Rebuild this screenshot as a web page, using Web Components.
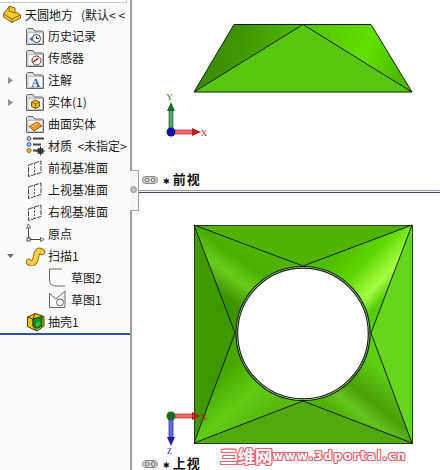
<!DOCTYPE html>
<html lang="zh">
<head>
<meta charset="utf-8">
<title>天圆地方</title>
<style>
  html, body { margin: 0; padding: 0; background: #fff; }
</style>
</head>
<body>
<cad-app>
  <feature-tree slot="tree">
    <tree-row label="天圆地方&nbsp;&nbsp;&nbsp;(默认&lt;&nbsp;&lt;" text-x="25" icon-x="3" class="title"><part-icon slot="icon" kind="part"></part-icon></tree-row>
    <tree-row label="历史记录"><folder-icon slot="icon" kind="history"></folder-icon></tree-row>
    <tree-row label="传感器"><folder-icon slot="icon" kind="sensor"></folder-icon></tree-row>
    <tree-row label="注解" arrow="right"><folder-icon slot="icon" kind="note"></folder-icon></tree-row>
    <tree-row label="实体(1)" arrow="right"><folder-icon slot="icon" kind="solid"></folder-icon></tree-row>
    <tree-row label="曲面实体"><folder-icon slot="icon" kind="surface"></folder-icon></tree-row>
    <tree-row label="材质&nbsp;&nbsp;&lt;未指定&gt;"><part-icon slot="icon" kind="material"></part-icon></tree-row>
    <tree-row label="前视基准面"><part-icon slot="icon" kind="plane"></part-icon></tree-row>
    <tree-row label="上视基准面"><part-icon slot="icon" kind="plane"></part-icon></tree-row>
    <tree-row label="右视基准面"><part-icon slot="icon" kind="plane"></part-icon></tree-row>
    <tree-row label="原点"><part-icon slot="icon" kind="origin"></part-icon></tree-row>
    <tree-row label="扫描1" arrow="down"><part-icon slot="icon" kind="sweep"></part-icon></tree-row>
    <tree-row label="草图2" text-x="71" icon-x="48"><part-icon slot="icon" kind="sketch2"></part-icon></tree-row>
    <tree-row label="草图1" text-x="71" icon-x="48"><part-icon slot="icon" kind="sketch1"></part-icon></tree-row>
    <tree-row label="抽壳1"><part-icon slot="icon" kind="shell"></part-icon></tree-row>
  </feature-tree>

  <view-pane slot="top" label="前视" style="height:190px; --label-bottom:1px">
    <svg width="309" height="190" viewBox="131 0 309 190">
      <defs>
        <linearGradient id="ta" gradientUnits="userSpaceOnUse" x1="205" y1="40" x2="300" y2="60">
          <stop offset="0" stop-color="#3b8c02"/>
          <stop offset=".35" stop-color="#3f9500"/>
          <stop offset="1" stop-color="#55bd00"/>
        </linearGradient>
        <linearGradient id="tb" gradientUnits="userSpaceOnUse" x1="310" y1="30" x2="400" y2="75">
          <stop offset="0" stop-color="#56c400"/>
          <stop offset=".6" stop-color="#62e000"/>
          <stop offset="1" stop-color="#4fb800"/>
        </linearGradient>
      </defs>
      <polygon points="234,24.5 303,24.5 194,92" fill="url(#ta)"/>
      <polygon points="303,24.5 371,24.5 412,92" fill="url(#tb)"/>
      <polygon points="303,24.5 194,92 412,92" fill="#58c50e"/>
      <g fill="none" stroke="#10200a" stroke-width="1">
        <polygon points="234,24.5 371,24.5 412,92 194,92"/>
        <path d="M194 92 303 24.5 412 92"/>
      </g>
      <g>
        <rect x="169" y="108" width="4" height="24" fill="#5f9f6f" stroke="#1d6a2a" stroke-width=".7"/>
        <path d="M171 102 175 111H167Z" fill="#1d6a2a"/>
        <rect x="171" y="130" width="22" height="4" fill="#ee6a6a" stroke="#b02020" stroke-width=".7"/>
        <path d="M201 132 192 128V136Z" fill="#b52020"/>
        <circle cx="171" cy="132" r="4.500" fill="#12129a"/>
        <text x="169.500" y="100" font-size="9" font-family="Liberation Serif, serif" fill="#1d7a2a" text-anchor="middle">Y</text>
        <text x="204" y="136" font-size="9" font-family="Liberation Serif, serif" fill="#c02020" text-anchor="middle">X</text>
      </g>
    </svg>
  </view-pane>

  <view-divider slot="divider"></view-divider>

  <view-pane slot="bottom" label="上视" style="height:277px; --label-bottom:-3px">
    <svg width="309" height="277" viewBox="131 193 309 277">
      <defs>
        <linearGradient id="tl" gradientUnits="userSpaceOnUse" x1="250" y1="240" x2="215" y2="290">
          <stop offset="0" stop-color="#4fb400"/>
          <stop offset=".35" stop-color="#4aae00"/>
          <stop offset=".65" stop-color="#68cc1c"/>
          <stop offset="1" stop-color="#3d9200"/>
        </linearGradient>
        <linearGradient id="tr" gradientUnits="userSpaceOnUse" x1="345" y1="245" x2="392" y2="290">
          <stop offset="0" stop-color="#4dbb00"/>
          <stop offset=".4" stop-color="#5fd800"/>
          <stop offset=".78" stop-color="#a6ff44"/>
          <stop offset="1" stop-color="#58cc06"/>
        </linearGradient>
        <linearGradient id="br" gradientUnits="userSpaceOnUse" x1="390" y1="375" x2="350" y2="425">
          <stop offset="0" stop-color="#5ccf10"/>
          <stop offset=".5" stop-color="#4b9f08"/>
          <stop offset=".75" stop-color="#63c41e"/>
          <stop offset="1" stop-color="#4fb000"/>
        </linearGradient>
        <linearGradient id="bl" gradientUnits="userSpaceOnUse" x1="215" y1="380" x2="255" y2="425">
          <stop offset="0" stop-color="#47a800"/>
          <stop offset=".55" stop-color="#60cc12"/>
          <stop offset="1" stop-color="#58b80e"/>
        </linearGradient>
      </defs>
      <rect x="194" y="225" width="218" height="218" fill="#4fb300"/>
      <polygon points="194,225 194,443 235,333" fill="#3e9800"/>
      <polygon points="412,225 412,443 371,333" fill="#65d61c"/>
      <polygon points="194,443 412,443 303,401" fill="#52a90e"/>
      <path d="M194 225 303 266A67 67 0 0 0 235 333Z" fill="url(#tl)"/>
      <path d="M412 225 371 333A68 68 0 0 0 303 266Z" fill="url(#tr)"/>
      <path d="M412 443 303 401A68 68 0 0 0 371 333Z" fill="url(#br)"/>
      <path d="M194 443 235 333A68 68 0 0 0 303 401Z" fill="url(#bl)"/>
      <circle cx="303" cy="333.500" r="67" fill="#cfe6b8" stroke="#10200a" stroke-width="1.200"/>
      <circle cx="303" cy="333.500" r="65.300" fill="#fff" stroke="#142a0a" stroke-width="1.200"/>
      <g fill="none" stroke="#10200a" stroke-width="1">
        <rect x="194.500" y="225.500" width="218" height="218" stroke="#24401a"/>
        <path d="M194 225 303 266 412 225 371 333 412 443 303 401 194 443 235 333Z"/>
      </g>
      <g>
        <rect x="171" y="414" width="22" height="4" fill="#ee6a6a" stroke="#b02020" stroke-width=".7"/>
        <path d="M201 416 192 412V420Z" fill="#b52020"/>
        <rect x="169" y="416" width="4" height="22" fill="#6a6ae0" stroke="#20209a" stroke-width=".7"/>
        <path d="M171 446 167 437H175Z" fill="#20209a"/>
        <circle cx="171" cy="416" r="4.500" fill="#1c6a24"/>
        <text x="204" y="420" font-size="9" font-family="Liberation Serif, serif" fill="#c02020" text-anchor="middle">X</text>
        <text x="169.500" y="454" font-size="8" font-family="Liberation Serif, serif" fill="#20209a" text-anchor="middle">Z</text>
      </g>
    </svg>
    <water-mark>
      <span class="cn">三维网</span><span>www.3dportal.cn</span>
    </water-mark>
  </view-pane>
</cad-app>

<script>
const CJK = '"Noto Sans CJK SC", "Liberation Sans", sans-serif';

class CadApp extends HTMLElement {
  constructor() {
    super();
    this.attachShadow({ mode: 'open' }).innerHTML = `
      <style>
        :host { display: grid; grid-template-columns: 131px 1fr; width: 440px; height: 470px; overflow: hidden; position: relative; background: #fff; }
        .side { border-right: 2px solid #a0a0a0; background: #fafafa; margin-right: -1px; }
        .views { display: flex; flex-direction: column; min-width: 0; }
        .handle { position: absolute; left: 130px; top: 170px; width: 8px; height: 39px; background: #f6f6f6; border: 1px solid #a0a0a0; border-left: 0; }
        .handle::after { content: ""; position: absolute; left: 0; top: 15px; width: 7px; height: 7px; border-radius: 50%; background: #bdbdbd; border: 1px solid #999; box-sizing: border-box; }
      </style>
      <div class="side"><slot name="tree"></slot></div>
      <div class="views">
        <slot name="top"></slot>
        <slot name="divider"></slot>
        <slot name="bottom"></slot>
      </div>
      <div class="handle"></div>
    `;
  }
}

class FeatureTree extends HTMLElement {
  constructor() {
    super();
    this.attachShadow({ mode: 'open' }).innerHTML = `
      <style>
        :host { display: block; height: 470px; box-sizing: border-box; }
        .top { height: 2px; margin-right: 3px; border-bottom: 1px solid #c8c8c8; border-right: 1px solid #c8c8c8; background: #fff; }
        .rows { display: flex; flex-direction: column; }
        .end { height: 2px; background: #2b55a0; }
      </style>
      <div class="top"></div>
      <div class="rows"><slot></slot></div>
      <div class="end"></div>
    `;
  }
}

class TreeRow extends HTMLElement {
  connectedCallback() {
    const textX = Number(this.getAttribute('text-x') || 48);
    const iconX = Number(this.getAttribute('icon-x') || 26);
    const arrow = this.getAttribute('arrow');
    let glyph = '';
    if (arrow === 'right') glyph = '<svg width="5" height="7" style="margin-left:8px"><path d="M0 0 5 3.500 0 7Z" fill="#909090"/></svg>';
    if (arrow === 'down') glyph = '<svg width="7" height="4" style="margin-left:7px"><path d="M0 0H7L3.500 4Z" fill="#707070"/></svg>';
    this.attachShadow({ mode: 'open' }).innerHTML = `
      <style>
        :host { display: block; height: 22px; }
        .row { display: grid; grid-template-columns: ${iconX}px ${textX - iconX}px 1fr; align-items: center; height: 22px; }
        .arrow { display: flex; }
        .icon { display: flex; }
        .label { font: 12px/22px ${CJK}; color: #1c1c1c; white-space: nowrap; overflow: hidden; }
        :host(.title) .label { padding-top: 2px; line-height: 20px; }
      </style>
      <div class="row">
        <span class="arrow">${glyph}</span>
        <span class="icon"><slot name="icon"></slot></span>
        <span class="label">${this.getAttribute('label')}</span>
      </div>
    `;
  }
}

const FOLDER_GLYPHS = {
  history: `<circle cx="10.500" cy="10.500" r="4" fill="#fff" stroke="#445"/><path d="M10.500 8V10.500H13" fill="none" stroke="#333"/><path d="M3.500 11 6.500 8.500V13.500Z" fill="#2d6fb0"/>`,
  sensor: `<circle cx="10.500" cy="10.500" r="4.500" fill="#fff" stroke="#444"/><path d="M7 12 12.500 8" stroke="#c83a20" stroke-width="1.600"/>`,
  note: `<text x="9.500" y="15" font-size="12" font-weight="bold" text-anchor="middle" font-family="Liberation Serif, serif" fill="#2a5f9e">A</text>`,
  solid: `<path d="M9.500 6 13.500 8V12.500L9.500 14.500 5.500 12.500V8Z" fill="#e8b820" stroke="#7a5c10"/><path d="M5.500 8 9.500 10 13.500 8M9.500 10V14.500" fill="none" stroke="#7a5c10" stroke-width=".7"/>`,
  surface: `<path d="M3 10.500 11 6 16 10 8 15Z" fill="#f09a28" stroke="#a05a10"/><path d="M6 10.500 11 8" stroke="#ffd48a"/>`
};

class FolderIcon extends HTMLElement {
  connectedCallback() {
    this.attachShadow({ mode: 'open' }).innerHTML = `
      <style>:host { display: block; width: 18px; height: 17px; } svg { display: block; }</style>
      <svg width="18" height="17" viewBox="0 0 18 17">
        <path d="M.5 16.500V1.500L1.500.5H7L8.500 3H16.500L17.500 4V16.500Z" fill="#dcdcdc" stroke="#666"/>
        <rect x="2" y="4.500" width="14.500" height="11" fill="#f6f6f6" stroke="#9aa" stroke-width=".6"/>
        ${FOLDER_GLYPHS[this.getAttribute('kind')]}
      </svg>
    `;
  }
}

const PART_ICONS = {
  part: `<path d="M.5 10 6.500 2 12 4V9L13 8 17.500 11V14L9 18.500 .5 13Z" fill="#f4c828" stroke="#8a6410"/><path d="M.5 10 9 15 17.500 11M9 15V18.500M6.500 2 6 7 12 9" fill="none" stroke="#8a6410"/>`,
  material: `<circle cx="3" cy="2.500" r="2" fill="#bbb" stroke="#667"/><rect x="7" y="1.500" width="11" height="2" fill="#444"/>
    <circle cx="3" cy="8.500" r="2" fill="#8cc4e8" stroke="#468"/><rect x="7" y="7.500" width="8" height="2" fill="#444"/>
    <circle cx="3" cy="14.500" r="2" fill="#e8c030" stroke="#861"/><rect x="7" y="13.500" width="5" height="2" fill="#444"/>
    <circle cx="14.500" cy="15" r="3" fill="#333"/><circle cx="14.500" cy="15" r="1" fill="#ddd"/><path d="M14.500 10.500V19.500M10 15H19M11.500 12 17.500 18M17.500 12 11.500 18" stroke="#333"/>`,
  plane: `<path d="M2.500 7 15 3V14.500L2.500 18.500Z" fill="none" stroke="#444" stroke-dasharray="5 1"/><path d="M8.500 5V17" stroke="#555" stroke-dasharray="2 1.500"/>`,
  origin: `<path d="M2.500 4V15.500H15" fill="none" stroke="#444"/><path d="M2.500 0 .5 4H4.500ZM18 15.500 14.500 13.500V17.500Z" fill="#fff" stroke="#444" stroke-width=".8"/><rect x="1" y="14" width="3" height="3" fill="#fff" stroke="#444"/>`,
  sweep: `<g fill="none" stroke-linecap="round"><path d="M3 16C6 19 9 17 10 11 11 5 13 3.500 16 6" stroke="#9a7412" stroke-width="6.500"/><path d="M3 16C6 19 9 17 10 11 11 5 13 3.500 16 6" stroke="#f6cc48" stroke-width="4.500"/></g>`,
  sketch2: `<path d="M1.500 1H14M1.500 1V12Q1.500 18 8 18H17" fill="none" stroke="#666"/>`,
  sketch1: `<path d="M1.500 3.500V17.500H17V1L8 9Z" fill="none" stroke="#666"/><circle cx="12" cy="12.500" r="3.500" fill="#f8f8f8" stroke="#666"/>`,
  shell: `<path d="M1.500 5 9 1.500 18 4.500V14L11 19 1.500 14.500Z" fill="#efc418" stroke="#4a3a08"/><path d="M7 7 16 4.500V14L11 16.500 7 14Z" fill="#109028" stroke="#0a4a18"/><path d="M1.500 5 7 7V14L11 19M7 7 9 1.500" fill="none" stroke="#4a3a08"/><path d="M10 11 14 9V13L10 15Z" fill="#2cc040"/>`
};

class PartIcon extends HTMLElement {
  connectedCallback() {
    this.attachShadow({ mode: 'open' }).innerHTML = `
      <style>:host { display: block; width: 20px; height: 20px; } svg { display: block; }</style>
      <svg width="20" height="20" viewBox="0 0 20 20">${PART_ICONS[this.getAttribute('kind')]}</svg>
    `;
  }
}

class ViewPane extends HTMLElement {
  connectedCallback() {
    this.attachShadow({ mode: 'open' }).innerHTML = `
      <style>
        :host { display: block; position: relative; overflow: hidden; }
        ::slotted(svg) { display: block; }
        .label { position: absolute; left: 11px; bottom: var(--label-bottom, 1px); display: flex; align-items: center; gap: 5px; height: 18px; font: bold 13px/18px ${CJK}; color: #111; letter-spacing: 1px; }
        .star { font: 8px/18px "DejaVu Sans", sans-serif; margin-right: 2px; }
      </style>
      <slot></slot>
      <div class="label">
        <svg width="16" height="8" viewBox="0 0 16 8"><rect x=".5" y=".5" width="15" height="7" rx="3.500" fill="#d8d8d0" stroke="#888"/><circle cx="5" cy="4" r="2" fill="none" stroke="#777"/><circle cx="11" cy="4" r="2" fill="none" stroke="#777"/></svg>
        <span><span class="star">✱</span>${this.getAttribute('label')}</span>
      </div>
    `;
  }
}

class ViewDivider extends HTMLElement {
  constructor() {
    super();
    this.attachShadow({ mode: 'open' }).innerHTML = `
      <style>
        :host { display: block; height: 3px; margin-left: 8px; box-sizing: border-box; border-top: 1px solid #9a9aa8; border-bottom: 1px solid #3c4668; background: #f0f0f4; }
      </style>
    `;
  }
}

class WaterMark extends HTMLElement {
  constructor() {
    super();
    this.attachShadow({ mode: 'open' }).innerHTML = `
      <style>
        :host { position: absolute; left: 89px; top: 253px; display: flex; align-items: center; height: 20px; white-space: nowrap; font: bold 11.500px/20px "DejaVu Sans", sans-serif; letter-spacing: 1.600px; color: #fff;
          text-shadow: 1px 0 #e8646c, -1px 0 #e8646c, 0 1px #e8646c, 0 -1px #e8646c, 1px 1px #e8646c, -1px -1px #e8646c, 1px -1px #e8646c, -1px 1px #e8646c; }
        ::slotted(.cn) { font: bold 17.500px/20px ${CJK}; letter-spacing: 0; }
      </style>
      <slot></slot>
    `;
  }
}

customElements.define('cad-app', CadApp);
customElements.define('feature-tree', FeatureTree);
customElements.define('tree-row', TreeRow);
customElements.define('folder-icon', FolderIcon);
customElements.define('part-icon', PartIcon);
customElements.define('view-pane', ViewPane);
customElements.define('view-divider', ViewDivider);
customElements.define('water-mark', WaterMark);
</script>
</body>
</html>
